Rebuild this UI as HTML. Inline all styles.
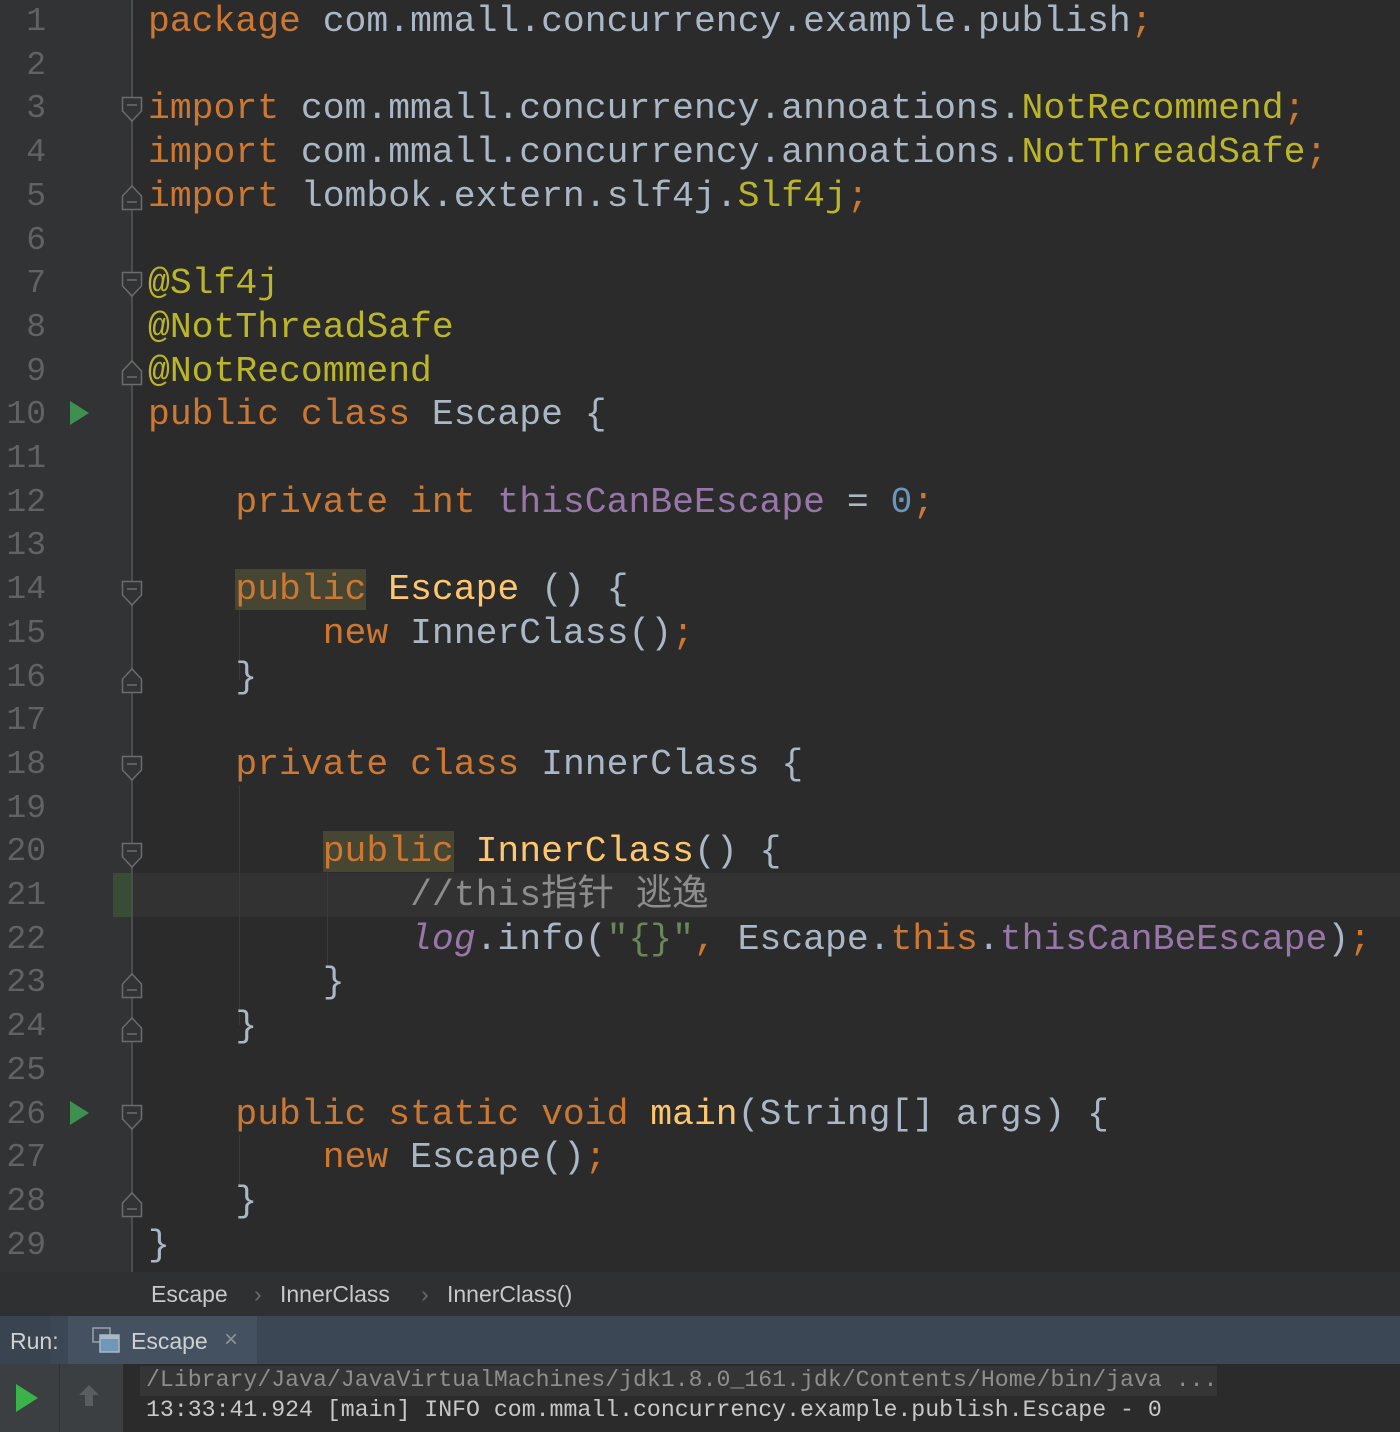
<!DOCTYPE html>
<html><head><meta charset="utf-8"><style>
html,body{margin:0;padding:0;}
body{width:1400px;height:1432px;background:#2b2b2b;position:relative;overflow:hidden;font-family:"Liberation Mono","Noto Sans CJK SC",monospace;}
.gut{position:absolute;left:0;top:0;width:132px;height:1272px;background:#313335;}
.gline{position:absolute;left:131px;top:0;width:2px;height:1272px;background:#4b4d4f;}
.hl{position:absolute;left:113px;top:873px;width:1287px;height:44px;background:#323232;}
.mark{position:absolute;left:113px;top:873px;width:19px;height:44px;background:#384c38;}
.ln{position:absolute;left:0;width:46px;text-align:right;font-size:33px;color:#606366;line-height:43.7px;height:43.7px;margin-top:2px;}
.l{position:absolute;left:148px;font-size:36.4px;line-height:43.7px;height:43.7px;white-space:pre;color:#a9b7c6;margin-top:2px;}
.k{color:#cc7832}.a{color:#bbb529}.f{color:#9876aa}.n{color:#6897bb}.m{color:#ffc66d}.s{color:#6a8759}.c{color:#8c8c8c}
.i{font-style:italic;color:#9876aa}
.hb{background:#474632;}
.guide{position:absolute;width:1px;background:#3b3b3b;}
.fold{position:absolute;left:121px;}
.run{position:absolute;left:70px;width:0;height:0;border-top:12px solid transparent;border-bottom:12px solid transparent;border-left:19px solid #3f8f50;}
.bc{position:absolute;left:0;top:1272px;width:1400px;height:44px;background:#2f3032;font-family:"Liberation Sans",sans-serif;font-size:23px;color:#c8c8c8;}
.bc span{position:absolute;top:9px;}
.tab{position:absolute;left:0;top:1316px;width:1400px;height:48px;background:#3b4754;font-family:"Liberation Sans",sans-serif;font-size:23px;color:#d0d0d0;}
.con{position:absolute;left:140px;top:1364px;width:1260px;height:68px;background:#2b2b2b;font-size:23.2px;line-height:30px;white-space:pre;color:#c0c0c0;}
</style></head><body>
<div class="gut"></div>
<div class="hl"></div>
<div class="mark"></div>
<div class="gline"></div>

<div class="guide" style="left:239px;top:610px;height:70px"></div>
<div class="guide" style="left:239px;top:785px;height:240px"></div>
<div class="guide" style="left:327px;top:872px;height:95px"></div>
<div class="guide" style="left:239px;top:1135px;height:50px"></div>

<div class="ln" style="top:-2px">1</div><div class="ln" style="top:41.7px">2</div><div class="ln" style="top:85.4px">3</div><div class="ln" style="top:129.1px">4</div><div class="ln" style="top:172.8px">5</div><div class="ln" style="top:216.5px">6</div><div class="ln" style="top:260.2px">7</div><div class="ln" style="top:303.9px">8</div><div class="ln" style="top:347.6px">9</div><div class="ln" style="top:391.3px">10</div><div class="ln" style="top:435px">11</div><div class="ln" style="top:478.7px">12</div><div class="ln" style="top:522.4px">13</div><div class="ln" style="top:566.1px">14</div><div class="ln" style="top:609.8px">15</div><div class="ln" style="top:653.5px">16</div><div class="ln" style="top:697.2px">17</div><div class="ln" style="top:740.9px">18</div><div class="ln" style="top:784.6px">19</div><div class="ln" style="top:828.3px">20</div><div class="ln" style="top:872px">21</div><div class="ln" style="top:915.7px">22</div><div class="ln" style="top:959.4px">23</div><div class="ln" style="top:1003.1px">24</div><div class="ln" style="top:1046.8px">25</div><div class="ln" style="top:1090.5px">26</div><div class="ln" style="top:1134.2px">27</div><div class="ln" style="top:1177.9px">28</div><div class="ln" style="top:1221.6px">29</div>

<div class="run" style="top:401px"></div>
<div class="run" style="top:1101px"></div>

<svg class="fold" style="top:96px" width="22" height="30"><path d="M1.5 1.5H20.5V15L11 25L1.5 15Z" fill="#313335" stroke="#6a6c6e" stroke-width="1.5"/><path d="M6 9H16" stroke="#6a6c6e" stroke-width="1.5"/></svg>
<svg class="fold" style="top:271px" width="22" height="30"><path d="M1.5 1.5H20.5V15L11 25L1.5 15Z" fill="#313335" stroke="#6a6c6e" stroke-width="1.5"/><path d="M6 9H16" stroke="#6a6c6e" stroke-width="1.5"/></svg>
<svg class="fold" style="top:580px" width="22" height="30"><path d="M1.5 1.5H20.5V15L11 25L1.5 15Z" fill="#313335" stroke="#6a6c6e" stroke-width="1.5"/><path d="M6 9H16" stroke="#6a6c6e" stroke-width="1.5"/></svg>
<svg class="fold" style="top:755px" width="22" height="30"><path d="M1.5 1.5H20.5V15L11 25L1.5 15Z" fill="#313335" stroke="#6a6c6e" stroke-width="1.5"/><path d="M6 9H16" stroke="#6a6c6e" stroke-width="1.5"/></svg>
<svg class="fold" style="top:842px" width="22" height="30"><path d="M1.5 1.5H20.5V15L11 25L1.5 15Z" fill="#313335" stroke="#6a6c6e" stroke-width="1.5"/><path d="M6 9H16" stroke="#6a6c6e" stroke-width="1.5"/></svg>
<svg class="fold" style="top:1104px" width="22" height="30"><path d="M1.5 1.5H20.5V15L11 25L1.5 15Z" fill="#313335" stroke="#6a6c6e" stroke-width="1.5"/><path d="M6 9H16" stroke="#6a6c6e" stroke-width="1.5"/></svg>
<svg class="fold" style="top:181px" width="22" height="30"><path d="M1.5 28.5H20.5V15L11 5L1.5 15Z" fill="#313335" stroke="#6a6c6e" stroke-width="1.5"/><path d="M6 21H16" stroke="#6a6c6e" stroke-width="1.5"/></svg>
<svg class="fold" style="top:356px" width="22" height="30"><path d="M1.5 28.5H20.5V15L11 5L1.5 15Z" fill="#313335" stroke="#6a6c6e" stroke-width="1.5"/><path d="M6 21H16" stroke="#6a6c6e" stroke-width="1.5"/></svg>
<svg class="fold" style="top:664px" width="22" height="30"><path d="M1.5 28.5H20.5V15L11 5L1.5 15Z" fill="#313335" stroke="#6a6c6e" stroke-width="1.5"/><path d="M6 21H16" stroke="#6a6c6e" stroke-width="1.5"/></svg>
<svg class="fold" style="top:969px" width="22" height="30"><path d="M1.5 28.5H20.5V15L11 5L1.5 15Z" fill="#313335" stroke="#6a6c6e" stroke-width="1.5"/><path d="M6 21H16" stroke="#6a6c6e" stroke-width="1.5"/></svg>
<svg class="fold" style="top:1013px" width="22" height="30"><path d="M1.5 28.5H20.5V15L11 5L1.5 15Z" fill="#313335" stroke="#6a6c6e" stroke-width="1.5"/><path d="M6 21H16" stroke="#6a6c6e" stroke-width="1.5"/></svg>
<svg class="fold" style="top:1188px" width="22" height="30"><path d="M1.5 28.5H20.5V15L11 5L1.5 15Z" fill="#313335" stroke="#6a6c6e" stroke-width="1.5"/><path d="M6 21H16" stroke="#6a6c6e" stroke-width="1.5"/></svg>

<div class="l" style="top:-2px"><span class="k">package</span> com.mmall.concurrency.example.publish<span class="k">;</span></div>
<div class="l" style="top:85.4px"><span class="k">import</span> com.mmall.concurrency.annoations.<span class="a">NotRecommend</span><span class="k">;</span></div>
<div class="l" style="top:129.1px"><span class="k">import</span> com.mmall.concurrency.annoations.<span class="a">NotThreadSafe</span><span class="k">;</span></div>
<div class="l" style="top:172.8px"><span class="k">import</span> lombok.extern.slf4j.<span class="a">Slf4j</span><span class="k">;</span></div>
<div class="l a" style="top:260.2px">@Slf4j</div>
<div class="l a" style="top:303.9px">@NotThreadSafe</div>
<div class="l a" style="top:347.6px">@NotRecommend</div>
<div class="l" style="top:391.3px"><span class="k">public class</span> Escape {</div>
<div class="l" style="top:478.7px">    <span class="k">private int</span> <span class="f">thisCanBeEscape</span> = <span class="n">0</span><span class="k">;</span></div>
<div class="l" style="top:566.1px">    <span class="k hb">public</span> <span class="m">Escape</span> () {</div>
<div class="l" style="top:609.8px">        <span class="k">new</span> InnerClass()<span class="k">;</span></div>
<div class="l" style="top:653.5px">    }</div>
<div class="l" style="top:740.9px">    <span class="k">private class</span> InnerClass {</div>
<div class="l" style="top:828.3px">        <span class="k hb">public</span> <span class="m">InnerClass</span>() {</div>
<div class="l" style="top:872px">            <span class="c">//this指针 逃逸</span></div>
<div class="l" style="top:915.7px">            <span class="i">log</span>.info(<span class="s">"{}"</span><span class="k">,</span> Escape.<span class="k">this</span>.<span class="f">thisCanBeEscape</span>)<span class="k">;</span></div>
<div class="l" style="top:959.4px">        }</div>
<div class="l" style="top:1003.1px">    }</div>
<div class="l" style="top:1090.5px">    <span class="k">public static void</span> <span class="m">main</span>(String[] args) {</div>
<div class="l" style="top:1134.2px">        <span class="k">new</span> Escape()<span class="k">;</span></div>
<div class="l" style="top:1177.9px">    }</div>
<div class="l" style="top:1221.6px">}</div>

<div class="bc"><span style="left:151px">Escape</span><span style="left:254px;color:#6a6a6a">›</span><span style="left:280px">InnerClass</span><span style="left:421px;color:#6a6a6a">›</span><span style="left:447px">InnerClass()</span></div>

<div class="tab">
<div style="position:absolute;left:0;top:0;width:50px;height:48px;background:#3a4450"></div>
<span style="position:absolute;left:10px;top:12px">Run:</span>
<div style="position:absolute;left:68px;top:0;width:189px;height:48px;background:#435160"></div>
<svg style="position:absolute;left:92px;top:11px" width="30" height="28"><rect x="1" y="1" width="17" height="14" fill="none" stroke="#9aa3ad" stroke-width="1.5"/><rect x="8" y="8" width="19" height="17" fill="#6f98b8" stroke="#aab8c4" stroke-width="1.5"/><rect x="8" y="8" width="19" height="4" fill="#aab8c4"/></svg>
<span style="position:absolute;left:131px;top:12px">Escape</span>
<span style="position:absolute;left:224px;top:10px;color:#8a929a;font-size:24px">×</span>
</div>

<div style="position:absolute;left:0;top:1364px;width:123px;height:68px;background:#3c3f41"></div>
<div style="position:absolute;left:59px;top:1364px;width:1px;height:68px;background:#2f3133"></div>
<div style="position:absolute;left:123px;top:1364px;width:17px;height:68px;background:#2b2b2b"></div>
<div style="position:absolute;left:16px;top:1384px;width:0;height:0;border-top:14px solid transparent;border-bottom:14px solid transparent;border-left:22px solid #3bb34a"></div>
<svg style="position:absolute;left:78px;top:1384px" width="22" height="24"><path d="M11 1L21 11H15V22H7V11H1Z" fill="#5a5d60"/></svg>

<div class="con"><div style="position:absolute;left:0;top:2px;width:1077px;height:30px;background:#353535"></div><div style="position:absolute;left:6px;top:1px;color:#8e8e8e">/Library/Java/JavaVirtualMachines/jdk1.8.0_161.jdk/Contents/Home/bin/java ...</div><div style="position:absolute;left:6px;top:31px;color:#c8c8c8">13:33:41.924 [main] INFO com.mmall.concurrency.example.publish.Escape - 0</div></div>
</body></html>
